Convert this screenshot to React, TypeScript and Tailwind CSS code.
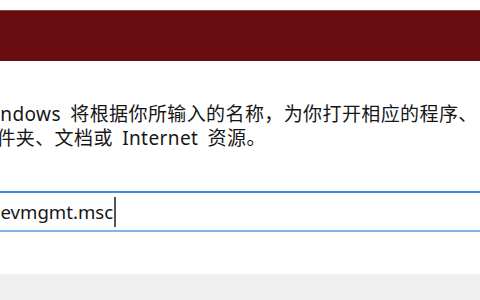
import React from 'react';

const font = { fontFamily: '"Noto Sans", "Noto Sans CJK SC", sans-serif' };

export default function App() {
  return (
    <div className="w-[480px] h-[300px] overflow-hidden bg-white flex flex-col" style={font}>
      {/* top strip, title cut off */}
      <div className="h-[10px] bg-white" />

      {/* red header band */}
      <div className="h-[51px] bg-[#670d12] border-t border-[#8a4448]" />

      {/* description */}
      <div className="pt-[41px] ml-[-23px] text-[19px] leading-[24px] text-[#161616] whitespace-nowrap tracking-[0.4px] [word-spacing:4px]">
        <div>Windows 将根据你所输入的名称，为你打开相应的程序、</div>
        <div>文件夹、文档或 Internet 资源。</div>
      </div>

      {/* input */}
      <div className="mt-[41px] ml-[-14px] w-[520px] h-[41px] border-t-2 border-b-2 border-l-2 border-t-[#3a8ee2] border-b-[#7db5ec] border-l-[#3a8ee2] bg-white flex items-center pl-[1px]">
        <span className="text-[18.6px] leading-[24px] text-[#161616]">devmgmt.msc</span>
        <span className="w-[2px] h-[30px] bg-[#555] ml-[1px]" />
      </div>

      <div className="flex-1 bg-white" />
      <div className="h-[26px] bg-[#f0f0f0]" />
    </div>
  );
}
